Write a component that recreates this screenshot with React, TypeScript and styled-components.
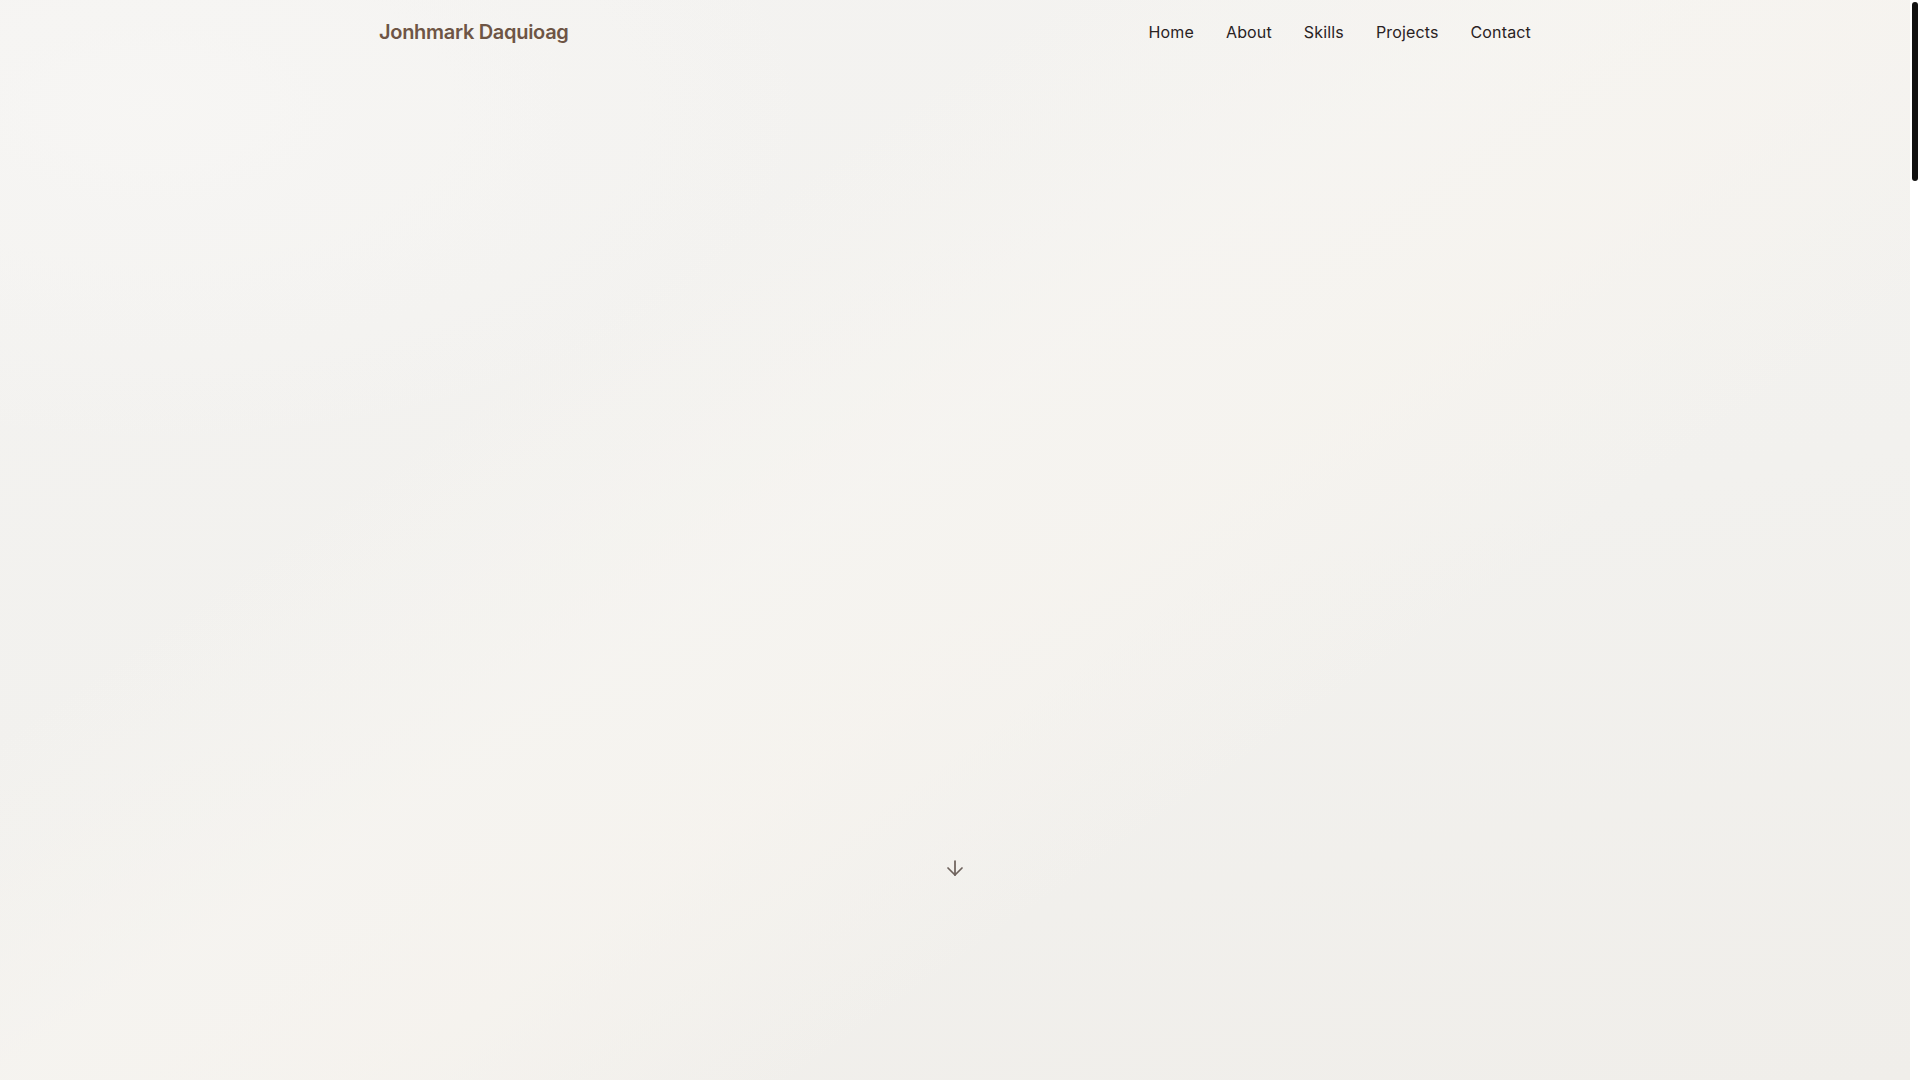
import styled, { createGlobalStyle } from "styled-components";
import { ArrowDown } from "lucide-react";

const navLinks = ["Home", "About", "Skills", "Projects", "Contact"];

const sections = [
	{ id: "about", height: 1400 },
	{ id: "skills", height: 1300 },
	{ id: "projects", height: 1600 },
	{ id: "contact", height: 1100 },
];

const pageHeight = 1080 + sections.reduce((sum, s) => sum + s.height, 0);

export default function App() {
	const thumb = (1080 / pageHeight) * 100;

	return (
		<>
			<GlobalStyle />
			<Page>
				<Header>
					<HeaderInner>
						<Logo href="#home">Jonhmark Daquioag</Logo>
						<Nav>
							{navLinks.map((link) => (
								<NavLink key={link} href={`#${link.toLowerCase()}`}>
									{link}
								</NavLink>
							))}
						</Nav>
					</HeaderInner>
				</Header>

				<Hero id="home">
					<ScrollHint href="#about" aria-label="Scroll down">
						<ArrowDown size={24} strokeWidth={1.75} />
					</ScrollHint>
				</Hero>

				{sections.map((s) => (
					<Section key={s.id} id={s.id} $height={s.height} />
				))}
			</Page>
			<ScrollRail aria-hidden>
				<ScrollThumb style={{ height: `${thumb}%` }} />
			</ScrollRail>
		</>
	);
}

const GlobalStyle = createGlobalStyle`
	html, body {
		margin: 0;
		padding: 0;
	}
	body {
		background: #f2f0ed;
		font-family: Inter, "Noto Sans", "Liberation Sans", sans-serif;
		color: #2a2320;
		padding-right: 10px;
	}
	::-webkit-scrollbar {
		display: none;
	}
`;

const Page = styled.div`
	min-height: 100vh;
	background:
		linear-gradient(
			145deg,
			transparent 30%,
			rgba(247, 245, 241, 0.7) 45%,
			rgba(247, 244, 239, 0.7) 55%,
			transparent 68%
		),
		radial-gradient(ellipse 50% 45% at 8% 10%, rgba(247, 246, 244, 0.9), transparent 70%),
		linear-gradient(170deg, #f4f3f1 0%, #f2f1ee 55%, #f0eeea 100%);
	background-size: 100% 1080px;
	background-repeat: no-repeat;
	background-color: #f0eeeb;
`;

const Header = styled.header`
	height: 64px;
	display: flex;
	align-items: center;
`;

const HeaderInner = styled.div`
	width: 100%;
	max-width: 1152px;
	margin: 0 auto;
	display: flex;
	align-items: center;
	justify-content: space-between;
`;

const Logo = styled.a`
	font-size: 20px;
	font-weight: 600;
	letter-spacing: -0.3px;
	color: #6e5545;
	text-decoration: none;
`;

const Nav = styled.nav`
	display: flex;
	align-items: center;
	gap: 32px;
`;

const NavLink = styled.a`
	font-size: 16px;
	font-weight: 400;
	letter-spacing: 0.15px;
	color: #29221f;
	text-decoration: none;
`;

const Hero = styled.section`
	height: calc(1080px - 64px);
	display: flex;
	flex-direction: column;
	align-items: center;
	justify-content: flex-end;
	padding-bottom: 200px;
	box-sizing: border-box;
`;

const ScrollHint = styled.a`
	display: flex;
	color: #6e625c;
`;

const Section = styled.section<{ $height: number }>`
	height: ${({ $height }) => $height}px;
`;

const ScrollRail = styled.div`
	position: fixed;
	top: 0;
	right: 0;
	width: 10px;
	height: 100vh;
	background: #ffffff;
	padding: 2px;
	box-sizing: border-box;
`;

const ScrollThumb = styled.div`
	width: 100%;
	border-radius: 4px;
	background: #111111;
`;
